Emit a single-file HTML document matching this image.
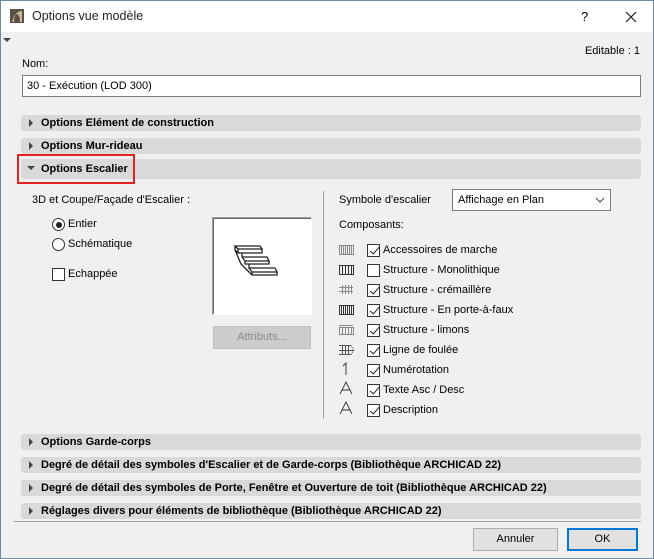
<!DOCTYPE html>
<html><head><meta charset="utf-8"><style>
*{box-sizing:border-box;margin:0;padding:0}
body{width:654px;height:559px;overflow:hidden;font-family:"Liberation Sans",sans-serif;font-size:11px;color:#000;background:#f0f0f0}
.win{position:absolute;left:0;top:0;width:654px;height:559px;border:1px solid #6f8aa6;background:#f0f0f0}
.title{position:absolute;left:0;top:0;width:652px;height:31px;background:#fff}
.a{position:absolute;white-space:nowrap}
.bar{position:absolute;left:20px;width:620px;height:16px;background:#d9d9d9;border-radius:3px;font-weight:bold;font-size:11px;line-height:16px;padding-left:20px}
.bar:before{content:"";position:absolute;left:8px;top:4px;border-left:4px solid #444;border-top:4px solid transparent;border-bottom:4px solid transparent}
.bar.open:before{left:6px;top:7px;border-top:4px solid #444;border-left:4px solid transparent;border-right:4px solid transparent;border-bottom:0}
.cb{position:absolute;width:13px;height:13px;border:1px solid #333;background:#fff}
.cb.c:after{content:"";position:absolute;left:3.5px;top:0px;width:4px;height:8px;border-right:1.3px solid #222;border-bottom:1.3px solid #222;transform:rotate(40deg)}
.rd{position:absolute;width:13px;height:13px;border:1px solid #333;border-radius:50%;background:#fff}
.btn{position:absolute;height:23px;border:1px solid #adadad;background:#e1e1e1;text-align:center;line-height:21px;font-size:11px}
</style></head><body><div class="win">
<div class="title">
<svg class="a" style="left:9px;top:8px" width="14" height="14"><rect width="14" height="14" fill="#5a5045"/><path d="M2 13 Q5 2 12 2 L12 13 L10 13 Q10 5 6 5 Q4 8 4 13Z" fill="#c9b79a"/></svg>
<div class="a" style="left:31px;top:8px;font-size:12.5px;color:#222">Options vue modèle</div>
<div class="a" style="left:580px;top:8px;font-size:13px">?</div>
<svg class="a" style="left:624px;top:10px" width="12" height="12"><path d="M1 1L11 11M11 1L1 11" stroke="#222" stroke-width="1.2"/></svg>
</div>
<div class="a" style="left:2px;top:37px;border-top:4px solid #444;border-left:4px solid transparent;border-right:4px solid transparent"></div>
<div class="a" style="right:13px;top:44px;font-size:11px">Editable : 1</div>
<div class="a" style="left:21px;top:57px;font-size:11px">Nom:</div>
<div class="a" style="left:21px;top:74px;width:619px;height:22px;border:1px solid #7a7a7a;background:#fff;padding:4px 4px;font-size:11px">30 - Exécution (LOD 300)</div>
<div class="bar" style="top:114px">Options Elément de construction</div>
<div class="bar" style="top:137px">Options Mur-rideau</div>
<div class="bar open" style="top:158px;height:20px;line-height:20px">Options Escalier</div>
<div class="a" style="left:16px;top:153px;width:118px;height:30px;border:2px solid #e52222"></div>
<div class="a" style="left:31px;top:193px;font-size:11px">3D et Coupe/Façade d'Escalier :</div>
<div class="rd" style="left:51px;top:217px"><div style="position:absolute;left:2.5px;top:2.5px;width:6px;height:6px;border-radius:50%;background:#222"></div></div>
<div class="a" style="left:67px;top:217px">Entier</div>
<div class="rd" style="left:51px;top:237px"></div>
<div class="a" style="left:67px;top:237px">Schématique</div>
<div class="cb" style="left:51px;top:267px"></div>
<div class="a" style="left:67px;top:267px">Echappée</div>
<div class="a" style="left:211px;top:216px;width:100px;height:98px;background:#fff;border:1px solid #a0a0a0;border-right-color:#fff;border-bottom-color:#fff;box-shadow:inset 1px 1px 0 #696969"></div>
<svg class="a" style="left:232px;top:243px" width="60" height="42" fill="none" stroke="#222" stroke-width="1.3"><path d="M2 2L27 2L29 5L5 5Z M5 5L5 9L29 9L29 5 M2 2L2 6L5 9 M9 9L9 13L34 13L36 17L12 17L9 13 M12 17L12 20L36 20L36 17 M16 20L16 24L42 24L44 28L19 28L16 24 M19 28L19 31L44 31L44 28 M2 6L8 20L19 31"/></svg>
<div class="btn" style="left:212px;top:325px;width:98px;color:#8a8a8a;background:#ccc;border-color:#bfbfbf">Attributs...</div>
<div class="a" style="left:322px;top:190px;width:1px;height:228px;background:#a0a0a0"></div>
<div class="a" style="left:338px;top:193px">Symbole d'escalier</div>
<div class="a" style="left:451px;top:188px;width:159px;height:22px;border:1px solid #7a7a7a;background:#fff;padding:4px 5px">Affichage en Plan</div>
<svg class="a" style="left:594px;top:196px" width="10" height="6"><path d="M1 1L5 5L9 1" stroke="#444" fill="none"/></svg>
<div class="a" style="left:338px;top:218px">Composants:</div>
<svg class="a" style="left:336px;top:241px" width="20" height="180" fill="none" stroke="#888" stroke-width="0.6" shape-rendering="crispEdges">
<rect x="2.5" y="3.5" width="14" height="9"/><path d="M4.5 3V12M6.5 3V12M8.5 3V12M10.5 3V12M12.5 3V12M14.5 3V12"/>
<rect x="2.5" y="23.5" width="14" height="9" stroke="#333"/><path d="M5.5 23V32M8.5 23V32M11.5 23V32M14.5 23V32" stroke="#333"/>
<path d="M2 45.5H16M2 49.5H16M5.5 43V52M8.5 43V52M11.5 43V52M14.5 43V52"/>
<rect x="2.5" y="63.5" width="14" height="9" stroke="#333"/><path d="M4.5 63V72M6.5 63V72M8.5 63V72M10.5 63V72M12.5 63V72M14.5 63V72" stroke="#333"/>
<path d="M2 83.5H16M2 92.5H16M2.5 85V93M16.5 85V93M5.5 85V93M8.5 85V93M11.5 85V93M14.5 85V93M2 85.5H16"/>
<path d="M2 103.5H14L17 108L14 112.5H2M2 108.5H17M5.5 103V113M8.5 103V113M11.5 103V113" stroke="#555"/>
</svg>
<svg class="a" style="left:336px;top:361px" width="20" height="60" fill="none" stroke="#333" stroke-width="0.9"><path d="M6 4L9 1V13"/><path d="M3 32L9 20L15 32M5 28H13"/><path d="M3 52L9 40L15 52M5 48H13"/></svg>
<div class="cb c" style="left:366px;top:243px"></div><div class="a" style="left:382px;top:243px">Accessoires de marche</div>
<div class="cb" style="left:366px;top:263px"></div><div class="a" style="left:382px;top:263px">Structure - Monolithique</div>
<div class="cb c" style="left:366px;top:283px"></div><div class="a" style="left:382px;top:283px">Structure - crémaillère</div>
<div class="cb c" style="left:366px;top:303px"></div><div class="a" style="left:382px;top:303px">Structure - En porte-à-faux</div>
<div class="cb c" style="left:366px;top:323px"></div><div class="a" style="left:382px;top:323px">Structure - limons</div>
<div class="cb c" style="left:366px;top:343px"></div><div class="a" style="left:382px;top:343px">Ligne de foulée</div>
<div class="cb c" style="left:366px;top:363px"></div><div class="a" style="left:382px;top:363px">Numérotation</div>
<div class="cb c" style="left:366px;top:383px"></div><div class="a" style="left:382px;top:383px">Texte Asc / Desc</div>
<div class="cb c" style="left:366px;top:403px"></div><div class="a" style="left:382px;top:403px">Description</div>
<div class="bar" style="top:433px">Options Garde-corps</div>
<div class="bar" style="top:456px">Degré de détail des symboles d'Escalier et de Garde-corps (Bibliothèque ARCHICAD 22)</div>
<div class="bar" style="top:479px">Degré de détail des symboles de Porte, Fenêtre et Ouverture de toit (Bibliothèque ARCHICAD 22)</div>
<div class="bar" style="top:502px">Réglages divers pour éléments de bibliothèque (Bibliothèque ARCHICAD 22)</div>
<div class="a" style="left:13px;top:520px;width:627px;height:1px;background:#a0a0a0"></div>
<div class="btn" style="left:472px;top:527px;width:85px">Annuler</div>
<div class="btn" style="left:566px;top:527px;width:71px;border:2px solid #0078d7;line-height:19px">OK</div>
</div></body></html>
